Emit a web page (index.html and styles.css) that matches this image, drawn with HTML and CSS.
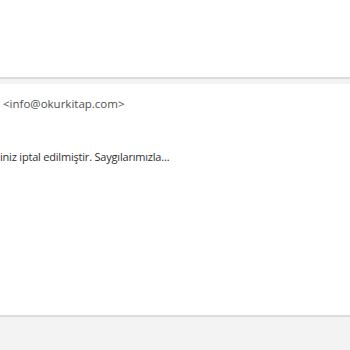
FILE: index.html
```html
<!DOCTYPE html>
<html lang="tr">
<head>
    <meta charset="UTF-8">
    <meta name="viewport" content="width=device-width, initial-scale=1.0">
    <title>Mesaj</title>
    <link rel="stylesheet" href="styles.css">
</head>
<body>
    <!-- Üst alan -->
    <div class="header"></div>

    <!-- Mesaj içeriği -->
    <div class="message">
        <div class="sender">&lt;info@okurkitap.com&gt;</div>
        <div class="preview">iniz iptal edilmiştir. Saygılarımızla...</div>
    </div>

    <!-- Alt çubuk -->
    <div class="footer"></div>
</body>
</html>
```

FILE: styles.css
```css
* {
    margin: 0;
    padding: 0;
    box-sizing: border-box;
}

body {
    font-family: 'Open Sans', 'Noto Sans', Arial, sans-serif;
    background-color: #fff;
    color: #444;
    width: 350px;
    height: 350px;
    overflow: hidden;
    display: flex;
    flex-direction: column;
}

.header {
    height: 79px;
    background-color: #fff;
    border-bottom: 2px solid #dcdcdc;
}

.message {
    flex: 1;
    background-color: #fff;
    border-top: 5px solid #f3f3f3;
    padding: 12px 0 0 0;
}

.sender {
    font-size: 11.5px;
    padding-left: 3px;
    color: #505050;
    line-height: 16px;
}

.preview {
    font-size: 11px;
    letter-spacing: -0.2px;
    color: #303030;
    line-height: 16px;
    margin-top: 37px;
}

.footer {
    height: 35px;
    background-color: #f3f3f3;
    border-top: 2px solid #dcdcdc;
}
```
